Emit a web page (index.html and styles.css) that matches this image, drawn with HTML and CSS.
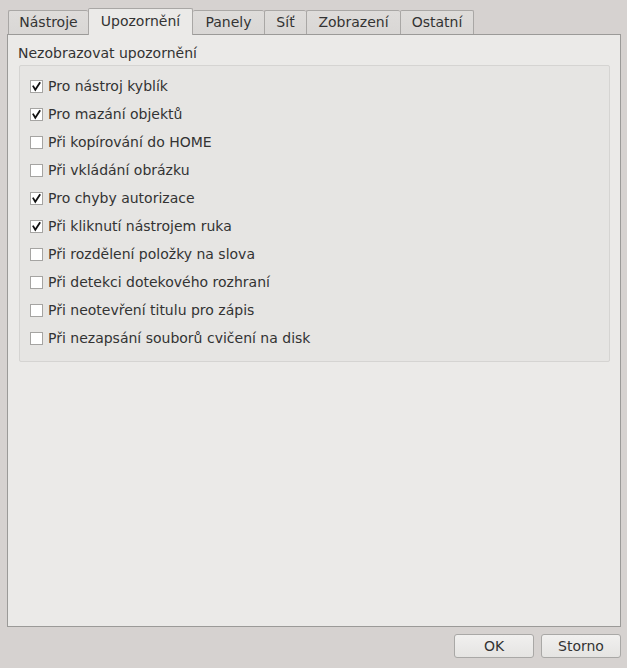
FILE: index.html
```html
<!DOCTYPE html>
<html lang="cs">
<head>
<meta charset="utf-8">
<link rel="stylesheet" href="styles.css">
</head>
<body>
<div class="dialog">
  <div class="tabbar">
    <div class="tab t1">Nástroje</div>
    <div class="tab t2 active">Upozornění</div>
    <div class="tab t3">Panely</div>
    <div class="tab t4">Síť</div>
    <div class="tab t5">Zobrazení</div>
    <div class="tab t6">Ostatní</div>
  </div>
  <div class="pane">
    <div class="group-title">Nezobrazovat upozornění</div>
    <div class="group">
      <div class="row"><span class="box checked"><svg viewBox="0 0 13 13" width="13" height="13"><path d="M3.3 6.4 L5.3 9.8 L9.7 3" fill="none" stroke="#111" stroke-width="1.8" stroke-linecap="square" stroke-linejoin="miter"/></svg></span>Pro nástroj kyblík</div>
      <div class="row"><span class="box checked"><svg viewBox="0 0 13 13" width="13" height="13"><path d="M3.3 6.4 L5.3 9.8 L9.7 3" fill="none" stroke="#111" stroke-width="1.8" stroke-linecap="square" stroke-linejoin="miter"/></svg></span>Pro mazání objektů</div>
      <div class="row"><span class="box"></span>Při kopírování do HOME</div>
      <div class="row"><span class="box"></span>Při vkládání obrázku</div>
      <div class="row"><span class="box checked"><svg viewBox="0 0 13 13" width="13" height="13"><path d="M3.3 6.4 L5.3 9.8 L9.7 3" fill="none" stroke="#111" stroke-width="1.8" stroke-linecap="square" stroke-linejoin="miter"/></svg></span>Pro chyby autorizace</div>
      <div class="row"><span class="box checked"><svg viewBox="0 0 13 13" width="13" height="13"><path d="M3.3 6.4 L5.3 9.8 L9.7 3" fill="none" stroke="#111" stroke-width="1.8" stroke-linecap="square" stroke-linejoin="miter"/></svg></span>Při kliknutí nástrojem ruka</div>
      <div class="row"><span class="box"></span>Při rozdělení položky na slova</div>
      <div class="row"><span class="box"></span>Při detekci dotekového rozhraní</div>
      <div class="row"><span class="box"></span>Při neotevření titulu pro zápis</div>
      <div class="row"><span class="box"></span>Při nezapsání souborů cvičení na disk</div>
    </div>
  </div>
  <div class="buttons">
    <button class="btn">OK</button>
    <button class="btn">Storno</button>
  </div>
</div>
</body>
</html>
```

FILE: styles.css
```css
html, body {
  margin: 0;
  padding: 0;
  background: #d6d2d0;
  font-family: "DejaVu Sans", sans-serif;
  font-size: 14px;
  color: #333333;
}

.dialog {
  width: 614px;
  margin-left: 7px;
  padding-top: 8px;
}

.tabbar {
  display: flex;
  align-items: flex-end;
  height: 26px;
  padding-left: 1px;
  position: relative;
  z-index: 1;
}

.tab {
  box-sizing: border-box;
  height: 24px;
  border: 1px solid #a9a7a5;
  border-bottom: none;
  border-right: none;
  border-radius: 2px 2px 0 0;
  background: linear-gradient(#dedcda, #d9d7d5);
  line-height: 23px;
  text-align: center;
}
.tab:last-child { border-right: 1px solid #a9a7a5; }
.t1 { width: 80px; }
.t2 { width: 105px; }
.t3 { width: 71px; }
.t4 { width: 42px; }
.t5 { width: 94px; }
.t6 { width: 74px; }

.tab.active {
  height: 27px;
  margin-bottom: -1px;
  background: #ebeae8;
  border: 1px solid #a9a7a5;
  border-bottom: none;
  line-height: 24px;
}
.tab.active + .tab { border-left: none; }

.pane {
  box-sizing: border-box;
  height: 593px;
  background: #ebeae8;
  border: 1px solid #9b9a98;
  padding: 10px 10px 0 10px;
}

.group-title {
  height: 18px;
  line-height: 17px;
}

.group {
  box-sizing: border-box;
  margin: 2px 0 0 1px;
  height: 297px;
  border: 1px solid #d5d4d2;
  border-radius: 2px;
  background: #e6e5e3;
  padding: 6px 10px 0 10px;
}

.row {
  display: flex;
  align-items: center;
  height: 28px;
  white-space: nowrap;
}

.box {
  box-sizing: border-box;
  width: 13px;
  height: 13px;
  border: 1px solid #a5a4a2;
  background: #ffffff;
  margin-right: 5px;
  display: inline-flex;
  align-items: center;
  justify-content: center;
  flex: none;
}
.box svg { display: block; margin: -1px; }

.buttons {
  display: flex;
  justify-content: flex-end;
  gap: 7px;
  margin-top: 7px;
}

.btn {
  box-sizing: border-box;
  width: 80px;
  height: 24px;
  border: 1px solid #a9a8a6;
  border-radius: 3px;
  background: linear-gradient(#f1f0ef, #e5e4e2);
  font-family: "DejaVu Sans", sans-serif;
  font-size: 14px;
  color: #333333;
  padding: 0;
}
```
